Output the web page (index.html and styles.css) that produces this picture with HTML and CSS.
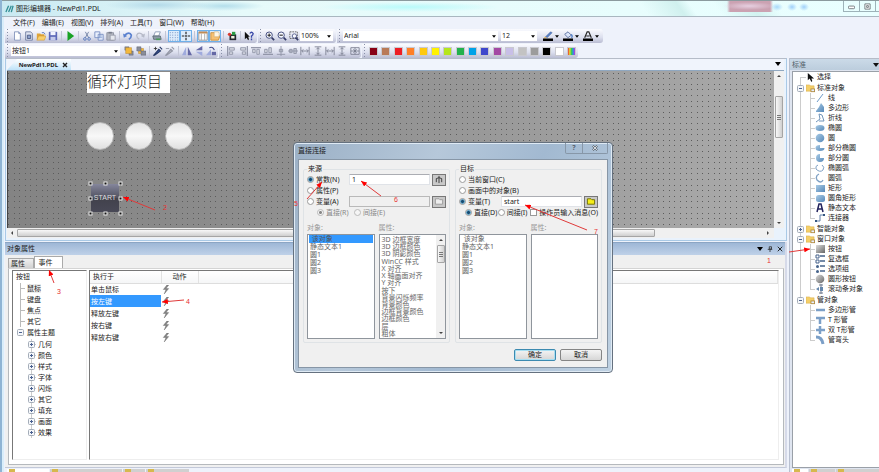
FILE: index.html
```html
<!DOCTYPE html>
<html lang="zh-CN">
<head>
<meta charset="utf-8">
<title>图形编辑器 - NewPdl1.PDL</title>
<link rel="stylesheet" href="styles.css">
</head>
<body>
<svg class="defs" aria-hidden="true">
  <linearGradient id="blue" x2="1" y2="1"><stop offset="0" stop-color="#a9cbe6"/><stop offset="1" stop-color="#5688b8"/></linearGradient>
  <linearGradient id="metal" x2="1" y2="1"><stop offset="0" stop-color="#ddd"/><stop offset="1" stop-color="#666"/></linearGradient>
  <symbol id="caret" viewBox="0 0 6 4"><path d="M0 0h6L3 4z"/></symbol>
  <symbol id="page" viewBox="0 0 12 12"><path d="M3 1h5l2 2v8H3z" fill="#fff" stroke="#7d8eb8"/><path d="M8 1v2h2" fill="none" stroke="#7d8eb8"/></symbol>
  <symbol id="pagecog" viewBox="0 0 12 12"><path d="M2 1h6l2 2v8H2z" fill="#dfe4f2" stroke="#66759b"/><path d="M4 5h4v4H4z" fill="#8fa2cc" stroke="#44537e"/></symbol>
  <symbol id="open" viewBox="0 0 12 12"><path d="M1 3h4l1 1h4v6H1z" fill="#e0a53a"/><path d="M3 6h9l-2 5H1z" fill="#f8cf6c" stroke="#c98f2c" stroke-width=".6"/><path d="M7 2q3-1 4 2" fill="none" stroke="#4e70b5"/></symbol>
  <symbol id="save" viewBox="0 0 12 12"><path d="M1 1h10v10H1z" fill="#5d68b8"/><path d="M3 1h6v4H3z" fill="#f2f4ff"/><path d="M3 7h6v4H3z" fill="#c3c9ea"/></symbol>
  <symbol id="play" viewBox="0 0 12 12"><path d="M3 0l8 6-8 6z" fill="#18a224"/></symbol>
  <symbol id="cut" viewBox="0 0 12 12"><path d="M4 1l4 7M8 1L4 8" stroke="#67789e" fill="none"/><circle cx="3.500" cy="9.500" r="1.600" fill="none" stroke="#4c70b8"/><circle cx="8.500" cy="9.500" r="1.600" fill="none" stroke="#4c70b8"/></symbol>
  <symbol id="copy" viewBox="0 0 12 12"><path d="M1 1h6v7H1zM5 4h6v7H5z" fill="#e9effc" stroke="#7088be"/><path d="M6 6h4M6 8h4" stroke="#8da5d4"/></symbol>
  <symbol id="paste" viewBox="0 0 12 12"><path d="M1 2h8v9H1z" fill="#b5b8c2" stroke="#8a8e9c"/><path d="M3 1h4v2H3z" fill="#777c8b"/><path d="M5 5h6v6H5z" fill="#e6e8ee" stroke="#9599a6"/></symbol>
  <symbol id="undo" viewBox="0 0 12 12"><path d="M2 5q6-5 8 0q0 3-3 5" fill="none" stroke="#5a80cf" stroke-width="2"/><path d="M0 3l1 5 4-2z" fill="#5a80cf"/></symbol>
  <symbol id="redo" viewBox="0 0 12 12"><path d="M10 5Q4 0 2 5q0 3 3 5" fill="none" stroke="#b6bac8" stroke-width="1.500"/><path d="M12 3l-1 5-4-2z" fill="#b6bac8"/></symbol>
  <symbol id="print" viewBox="0 0 12 12"><path d="M4 1h6L8 6H2z" fill="#fff" stroke="#8292ae"/><path d="M1 6h9l1 4H2z" fill="#8d9ca8" stroke="#59656f"/><path d="M5 9h5v2H5z" fill="#4b9c58"/></symbol>
  <symbol id="grid" viewBox="0 0 12 12"><path d="M1 2h11M1 5h11M1 8h11M1 11h11" stroke="#5573b2" stroke-dasharray="1 2"/></symbol>
  <symbol id="snap" viewBox="0 0 12 12"><path d="M6 1v3M6 8v3M1 6h3M8 6h3" stroke="#222" stroke-width="1.400"/><path d="M5 5h2v2H5z" fill="#222"/></symbol>
  <symbol id="panes" viewBox="0 0 12 12"><path d="M1 1h10v10H1z" fill="#fff" stroke="#8e8a8a"/><path d="M1 1h10v2H1z" fill="#c28c55"/><path d="M4 3v8M8 3v8" stroke="#a4a4a4"/></symbol>
  <symbol id="library" viewBox="0 0 12 12"><path d="M1 2h5v4h6l-2 5H1z" fill="#f7c173" stroke="#c98a35"/><path d="M5 1h5l1 2v4H5z" fill="#fff6e4" stroke="#c9a46b" stroke-width=".6"/></symbol>
  <symbol id="config" viewBox="0 0 12 12"><path d="M3 4h8v7H3z" fill="#22262e"/><path d="M6 1h4v4H6z" fill="#2c9b44"/><circle cx="3" cy="4" r="2" fill="#d93a2e"/><path d="M5 6h4v3H5z" fill="#f1f1e0"/></symbol>
  <symbol id="help" viewBox="0 0 12 12"><path d="M1 1v9l2-2 2 3 1-1-1-3h2z" fill="#111"/><path d="M7 3q2-3 4 0q0 2-2 3v2M9 9v2" fill="none" stroke="#3948a8" stroke-width="1.600"/></symbol>
  <symbol id="zoomin" viewBox="0 0 12 12"><path d="M8 8l3 3" stroke="#333a66" stroke-width="2"/><circle cx="5" cy="5" r="3.800" fill="#f7f9ff" stroke="#4a5383" stroke-width="1.200"/><path d="M3 5h4M5 3v4" stroke="#222" stroke-width="1.300"/></symbol>
  <symbol id="zoomout" viewBox="0 0 12 12"><path d="M8 8l3 3" stroke="#333a66" stroke-width="2"/><circle cx="5" cy="5" r="3.800" fill="#f7f9ff" stroke="#4a5383" stroke-width="1.200"/><path d="M3 5h4" stroke="#222" stroke-width="1.300"/></symbol>
  <symbol id="zoomarea" viewBox="0 0 12 12"><path d="M1 1h9v8H1z" fill="none" stroke="#555" stroke-dasharray="2 1"/><circle cx="6.500" cy="6" r="2.600" fill="#f7f9ff" stroke="#4a5383"/><path d="M8 8l3 3" stroke="#333a66" stroke-width="2"/></symbol>
  <symbol id="pen" viewBox="0 0 12 12"><path d="M3 7l6-6 2 1-6 6z" fill="#5b83c8" stroke="#31528f" stroke-width=".5"/><path d="M2 7l3 1-4 1z" fill="#e0b05a"/><path d="M0 9h12v3H0z"/></symbol>
  <symbol id="fill" viewBox="0 0 12 12"><path d="M2 4l4-3 4 4-4 3z" fill="#dce6fa" stroke="#4f6597"/><path d="M10 4q2 3 0 4" fill="none" stroke="#4678c4" stroke-width="1.500"/><path d="M0 9h12v3H0z"/></symbol>
  <symbol id="fontcolor" viewBox="0 0 12 12"><path d="M2 8l3-7h2l3 7M4 6h4" fill="none" stroke="#222" stroke-width="1.400"/><path d="M0 9h12v3H0z"/></symbol>
  <symbol id="front" viewBox="0 0 12 12"><path d="M6 6h5v5H6zM1 1h5v4H1z" fill="#8a8d99" stroke="#555b6b" stroke-width=".5"/><path d="M2 2h7v7H2z" fill="#f3b83c" stroke="#b17a1b" stroke-width=".5"/></symbol>
  <symbol id="back" viewBox="0 0 12 12"><path d="M3 3h6v6H3z" fill="#f3b83c" stroke="#b17a1b" stroke-width=".5"/><path d="M6 6h6v5H6zM1 1h5v5H1z" fill="#8a8d99" stroke="#555b6b" stroke-width=".5"/></symbol>
  <symbol id="pipette" viewBox="0 0 12 12"><path d="M1 11l6-7 2 2-7 5zM8 1l3 3" fill="#36549c" stroke="#263866" stroke-width="1.300"/><path d="M1 3h4M3 1v4" stroke="#333"/></symbol>
  <symbol id="pipette-off" viewBox="0 0 12 12"><path d="M1 11l6-7 2 2-7 5zM8 1l3 3" fill="#b6b9c4" stroke="#9296a5" stroke-width="1.300"/><path d="M1 3h4" stroke="#9296a5"/></symbol>
  <symbol id="fliph" viewBox="0 0 12 12"><path d="M5 1v10H0z" fill="#9faadd"/><path d="M7 1v10h5z" fill="#6468a5"/></symbol>
  <symbol id="flipv" viewBox="0 0 12 12"><path d="M10 0v5H2z" fill="#6468a5"/><path d="M10 12V7H2z" fill="#9faadd"/></symbol>
  <symbol id="rotate" viewBox="0 0 12 12"><path d="M6 4v7H0z" fill="#9faadd"/><path d="M7 7h5v4H7z" fill="#6468a5"/><path d="M4 2q4-2 6 3" fill="none" stroke="#434c85" stroke-width="1.300"/></symbol>
  <symbol id="al" viewBox="0 0 12 12"><path d="M2 0v12" stroke="#8d91a4" stroke-width="1.400"/><path d="M4 2h6v3H4zM4 7h4v3H4z" fill="#d5d8e2" stroke="#8d91a4"/></symbol>
  <symbol id="ar" viewBox="0 0 12 12"><path d="M10 0v12" stroke="#8d91a4" stroke-width="1.400"/><path d="M2 2h6v3H2zM4 7h4v3H4z" fill="#d5d8e2" stroke="#8d91a4"/></symbol>
  <symbol id="at" viewBox="0 0 12 12"><path d="M0 2h12" stroke="#8d91a4" stroke-width="1.400"/><path d="M2 4h3v4H2zM7 4h3v6H7z" fill="#d5d8e2" stroke="#8d91a4"/></symbol>
  <symbol id="ab" viewBox="0 0 12 12"><path d="M0 10h12" stroke="#8d91a4" stroke-width="1.400"/><path d="M2 4h3v4H2zM7 2h3v6H7z" fill="#d5d8e2" stroke="#8d91a4"/></symbol>
  <symbol id="cv" viewBox="0 0 12 12"><path d="M6 0v12M1 10h10M4 4h4v3H4z" fill="#c3c6d2" stroke="#8d91a4"/></symbol>
  <symbol id="ch" viewBox="0 0 12 12"><path d="M0 6h12M2 4h3v4H2zM7 3h3v6H7z" fill="#c3c6d2" stroke="#8d91a4"/></symbol>
  <symbol id="sh" viewBox="0 0 12 12"><path d="M1 1v10M11 1v10M2 6h8M4 4L2 6l2 2M8 4l2 2-2 2" fill="none" stroke="#777b8d"/></symbol>
  <symbol id="sv" viewBox="0 0 12 12"><path d="M2 1h8M2 11h8M6 2v8M4 4l2-2 2 2M4 8l2 2 2-2" fill="none" stroke="#777b8d"/></symbol>
  <symbol id="sb" viewBox="0 0 12 12"><path d="M1 2h10v8H1zM6 2v8M1 6h10M4 4l4 4M8 4L4 8" fill="none" stroke="#777b8d"/></symbol>
  <symbol id="cursor" viewBox="0 0 10 10"><path d="M2 0v8l2-2 2 4 1-1-1-3h3z" fill="#111"/></symbol>
  <symbol id="folder" viewBox="0 0 10 10"><path d="M0 1h4l1 1h4v6H0z" fill="#f4cf69" stroke="#d3a543" stroke-width=".5"/><path d="M5 5h5v4H5z" fill="#b28d45"/><path d="M6 6h3v2H6z" fill="#e8f0ff"/></symbol>
  <symbol id="line" viewBox="0 0 10 10"><path d="M2 9l6-8" stroke="#6f9bc8"/></symbol>
  <symbol id="polygon" viewBox="0 0 10 10"><path d="M1 8l3-4 2-4 3 4v5H1z" fill="url(#blue)"/></symbol>
  <symbol id="polyline" viewBox="0 0 10 10"><path d="M1 9l4-3-1-5 3 1 2 6H4" fill="none" stroke="#7295ba"/></symbol>
  <symbol id="ellipse" viewBox="0 0 10 10"><ellipse cx="5" cy="5" rx="4.500" ry="3" fill="url(#blue)"/></symbol>
  <symbol id="circle" viewBox="0 0 10 10"><circle cx="5" cy="5" r="4.300" fill="url(#blue)"/></symbol>
  <symbol id="epie" viewBox="0 0 10 10"><path d="M5 5V2a4.500 3 0 1 0 4.500 3z" fill="url(#blue)"/></symbol>
  <symbol id="pie" viewBox="0 0 10 10"><path d="M5 5V1a4 4 0 1 0 4 4z" fill="url(#blue)"/></symbol>
  <symbol id="earc" viewBox="0 0 10 10"><path d="M3 2Q0 3 1 6q4 4 7 1 2-3-1-5" fill="none" stroke="#7ea0c4"/></symbol>
  <symbol id="arc" viewBox="0 0 10 10"><path d="M4 1Q0 3 2 7q4 4 6 0" fill="none" stroke="#7ea0c4" stroke-width="1.300"/></symbol>
  <symbol id="rect" viewBox="0 0 10 10"><path d="M1 2h9v7H1z" fill="url(#blue)"/></symbol>
  <symbol id="rrect" viewBox="0 0 10 10"><rect x="1" y="2" width="9" height="7" rx="2.500" fill="url(#blue)"/></symbol>
  <symbol id="static" viewBox="0 0 10 10"><path d="M2 9l2-8h2l2 8M3 6h4" fill="none" stroke="#24245e" stroke-width="1.500"/></symbol>
  <symbol id="connector" viewBox="0 0 10 10"><path d="M1 8h4V2h4" fill="none" stroke="#6380aa"/><path d="M0 7h2v2H0zM8 1h2v2H8z" fill="#35567f"/></symbol>
  <symbol id="button" viewBox="0 0 10 10"><path d="M1 1h9v8H1z" fill="url(#metal)"/></symbol>
  <symbol id="check" viewBox="0 0 10 10"><path d="M1 1h3v3H1zM1 6h3v3H1z" fill="#fff" stroke="#46638b"/><path d="M5 2h5M5 7h5" stroke="#46638b" stroke-width="1.500"/></symbol>
  <symbol id="option" viewBox="0 0 10 10"><circle cx="2.500" cy="2.500" r="1.500" fill="#46638b"/><circle cx="2.500" cy="7.500" r="1.500" fill="#46638b"/><path d="M5 2h5M5 7h5" stroke="#46638b" stroke-width="1.500"/></symbol>
  <symbol id="round" viewBox="0 0 10 10"><circle cx="5" cy="5" r="4.300" fill="url(#metal)"/></symbol>
  <symbol id="slider" viewBox="0 0 10 10"><path d="M6 0v10M4 1h4M4 9h4" stroke="#707b8d"/><path d="M1 5l3-2v4zM5 3h3v4H5z" fill="#6587ac"/></symbol>
  <symbol id="pipe" viewBox="0 0 10 10"><path d="M1 5h9" stroke="#7b9fc7" stroke-width="2.500"/></symbol>
  <symbol id="tpipe" viewBox="0 0 10 10"><path d="M1 3h9M5 3v6" stroke="#7b9fc7" stroke-width="2.500"/></symbol>
  <symbol id="xpipe" viewBox="0 0 10 10"><path d="M1 5h9M5 1v8" stroke="#7b9fc7" stroke-width="2.500"/></symbol>
  <symbol id="elbow" viewBox="0 0 10 10"><path d="M1 2q6 0 7 7" fill="none" stroke="#7b9fc7" stroke-width="3"/></symbol>
  <symbol id="minus" viewBox="0 0 7 7"><rect x=".5" y=".5" width="6" height="6" rx="1" fill="#f5f7fa" stroke="#a4adb9"/><path d="M2 3.500h3" stroke="#4a6190"/></symbol>
  <symbol id="plus" viewBox="0 0 7 7"><rect x=".5" y=".5" width="6" height="6" rx="1" fill="#f5f7fa" stroke="#a4adb9"/><path d="M2 3.500h3M3.500 2v3" stroke="#4a6190"/></symbol>
  <symbol id="bolt" viewBox="0 0 8 10"><path d="M5 0L1 5h3L2 10l5-6H4l3-4z" fill="#858585" stroke="#5c5c5c" stroke-width=".4"/></symbol>
</svg>

<div class="app">
  <header class="titlebar">
    <svg class="app-icon" viewBox="0 0 10 10"><path d="M1 9l3-7M4 9l3-7M7 9l2-7" stroke="#348f96" stroke-width="1.500"/></svg>
    <h1>图形编辑器 - NewPdl1.PDL</h1>
    <div class="window-buttons">
      <button aria-label="最小化"><svg viewBox="0 0 8 8"><rect x=".5" y="3.500" width="7" height="3" rx="1" fill="#fff" stroke="#6b7478"/></svg></button>
      <button aria-label="还原"><svg viewBox="0 0 8 8"><path d="M1 1h6v6H1zM3 3h2v2H3z" fill="#fff" stroke="#6b7478"/></svg></button>
    </div>
  </header>
  <nav class="menu">
    <button>文件(F)</button><button>编辑(E)</button><button>视图(V)</button><button>排列(A)</button><button>工具(T)</button><button>窗口(W)</button><button>帮助(H)</button>
  </nav>
  <div class="toolbars">
    <div class="toolrow">
      <div class="toolbar main-tools">
        <button aria-label="新建"><svg><use href="#page"/></svg></button><button aria-label="新建类型"><svg><use href="#pagecog"/></svg></button><button aria-label="打开"><svg><use href="#open"/></svg></button><button aria-label="保存"><svg><use href="#save"/></svg></button>
        <i></i><button aria-label="运行"><svg><use href="#play"/></svg></button>
        <i></i><button aria-label="剪切"><svg><use href="#cut"/></svg></button><button aria-label="复制"><svg><use href="#copy"/></svg></button><button aria-label="粘贴"><svg><use href="#paste"/></svg></button>
        <i></i><button aria-label="撤销"><svg><use href="#undo"/></svg></button><button aria-label="重做"><svg><use href="#redo"/></svg></button>
        <i></i><button aria-label="打印"><svg><use href="#print"/></svg></button>
        <i></i><button class="on" aria-label="网格"><svg><use href="#grid"/></svg></button><button class="on" aria-label="对齐网格"><svg><use href="#snap"/></svg></button>
        <i></i><button class="on" aria-label="属性窗口"><svg><use href="#panes"/></svg></button><button class="on" aria-label="库"><svg><use href="#library"/></svg></button>
        <i></i><button aria-label="组态"><svg><use href="#config"/></svg></button>
        <i></i><button aria-label="帮助"><svg><use href="#help"/></svg></button>
      </div>
      <div class="toolbar zoom-tools">
        <button aria-label="放大"><svg><use href="#zoomin"/></svg></button><button aria-label="缩小"><svg><use href="#zoomout"/></svg></button><button aria-label="区域缩放"><svg><use href="#zoomarea"/></svg></button>
        <span class="combo"><select aria-label="缩放比例"><option>100%</option></select><svg><use href="#caret"/></svg></span>
      </div>
      <div class="toolbar font-tools">
        <span class="combo family"><select aria-label="字体"><option>Arial</option></select><svg><use href="#caret"/></svg></span>
        <span class="combo size"><select aria-label="字号"><option>12</option></select><svg><use href="#caret"/></svg></span>
        <button class="drop" aria-label="线条颜色"><svg><use href="#pen"/></svg><svg class="tiny"><use href="#caret"/></svg></button><button class="drop" aria-label="填充颜色"><svg><use href="#fill"/></svg><svg class="tiny"><use href="#caret"/></svg></button><button class="drop" aria-label="字体颜色"><svg><use href="#fontcolor"/></svg><svg class="tiny"><use href="#caret"/></svg></button>
      </div>
    </div>
    <div class="toolrow">
      <div class="toolbar object-tools">
        <span class="combo"><select aria-label="对象"><option>按钮1</option></select><svg><use href="#caret"/></svg></span>
        <button aria-label="置前"><svg><use href="#front"/></svg></button><button aria-label="置后"><svg><use href="#back"/></svg></button>
        <i></i><button aria-label="复制属性"><svg><use href="#pipette"/></svg></button><button aria-label="分配属性"><svg><use href="#pipette-off"/></svg></button>
        <i></i><button aria-label="水平镜像"><svg><use href="#fliph"/></svg></button><button aria-label="垂直镜像"><svg><use href="#flipv"/></svg></button><button aria-label="旋转"><svg><use href="#rotate"/></svg></button>
      </div>
      <div class="toolbar align-tools">
        <button aria-label="左对齐"><svg><use href="#al"/></svg></button><button aria-label="右对齐"><svg><use href="#ar"/></svg></button><button aria-label="上对齐"><svg><use href="#at"/></svg></button><button aria-label="下对齐"><svg><use href="#ab"/></svg></button><button aria-label="水平居中"><svg><use href="#cv"/></svg></button><button aria-label="垂直居中"><svg><use href="#ch"/></svg></button><button aria-label="水平间隔"><svg><use href="#sh"/></svg></button><button aria-label="垂直间隔"><svg><use href="#sv"/></svg></button><button aria-label="相同宽度"><svg><use href="#sh"/></svg></button><button aria-label="相同高度"><svg><use href="#sv"/></svg></button><button aria-label="相同大小"><svg><use href="#sb"/></svg></button>
      </div>
      <div class="toolbar swatches">
        <button class="c1" aria-label="深红"></button><button class="c2" aria-label="棕"></button><button class="c3" aria-label="红"></button><button class="c4" aria-label="橙"></button><button class="c5" aria-label="金"></button><button class="c6" aria-label="黄"></button><button class="c7" aria-label="黄绿"></button><button class="c8" aria-label="绿"></button><button class="c9" aria-label="天蓝"></button><button class="c10" aria-label="蓝"></button><button class="c11" aria-label="紫"></button><button class="c12" aria-label="淡紫"></button><button class="c13" aria-label="浅灰"></button><button class="c14" aria-label="灰"></button><button class="c15" aria-label="黑"></button><button class="c16" aria-label="白"></button><button class="c17" aria-label="其它颜色"></button>
      </div>
    </div>
  </div>

  <div class="workspace">
    <main class="left">
      <section class="document">
        <div class="doc-tabs"><div class="doc-tab"><b>NewPdl1.PDL</b><button aria-label="关闭"><svg viewBox="0 0 6 6"><path d="M1 1l4 4M5 1L1 5" stroke="#222" stroke-width="1.400"/></svg></button></div><svg class="arrow"><use href="#caret"/></svg></div>
        <div class="canvas-row">
          <div class="canvas">
            <svg class="dots" aria-hidden="true"><pattern id="dots" width="28" height="28" patternUnits="userSpaceOnUse"><path d="M0 2.500h28M0 7.500h28M0 13.500h28M0 18.500h28M0 24.500h28" stroke="#5c5c5c" stroke-dasharray="1 5 1 4 1 5 1 4 1 5"/></pattern><rect width="100%" height="100%" fill="url(#dots)"/></svg>
            <div class="heading">循环灯项目</div>
            <div class="lamp l1"></div><div class="lamp l2"></div><div class="lamp l3"></div>
            <div class="selected"><button>START</button>
              <svg viewBox="0 0 34 34"><g fill="#111" stroke="#e8e8e8"><rect x="1" y="1" width="3" height="3"/><rect x="16" y="1" width="3" height="3"/><rect x="31" y="1" width="3" height="3"/><rect x="1" y="16" width="3" height="3"/><rect x="31" y="16" width="3" height="3"/><rect x="1" y="31" width="3" height="3"/><rect x="16" y="31" width="3" height="3"/><rect x="31" y="31" width="3" height="3"/></g></svg>
            </div>
          </div>
          <div class="vscroll"><svg viewBox="0 0 6 4"><path d="M1 3l2-2 2 2z"/></svg><span class="thumb"></span><svg viewBox="0 0 6 4"><path d="M1 1l2 2 2-2z"/></svg></div>
        </div>
        <div class="hscroll"><svg viewBox="0 0 4 6"><path d="M3 1L1 3l2 2z"/></svg><span class="thumb"></span><svg viewBox="0 0 4 6"><path d="M1 1l2 2-2 2z"/></svg></div>
      </section>
      <section class="properties">
        <div class="panel-head"><h2>对象属性</h2><svg class="arrow"><use href="#caret"/></svg><svg viewBox="0 0 8 8"><path d="M3 1h3v3H3zM1 4.500h6M4 5v3" fill="none" stroke="#222"/></svg><svg viewBox="0 0 8 8"><path d="M1 1l6 6M7 1L1 7" stroke="#222" stroke-width="1.300"/></svg></div>
        <div class="tabs"><button>属性</button><button class="active">事件</button></div>
        <div class="panel-body">
          <ul class="prop-tree">
            <li class="root">按钮
              <ul>
                <li class="focus"><span>鼠标</span></li><li>键盘</li><li>焦点</li><li>其它</li>
                <li class="open"><svg><use href="#minus"/></svg>属性主题
                  <ul>
                    <li><svg><use href="#plus"/></svg>几何</li><li><svg><use href="#plus"/></svg>颜色</li><li><svg><use href="#plus"/></svg>样式</li><li><svg><use href="#plus"/></svg>字体</li><li><svg><use href="#plus"/></svg>闪烁</li><li><svg><use href="#plus"/></svg>其它</li><li><svg><use href="#plus"/></svg>填充</li><li><svg><use href="#plus"/></svg>画面</li><li><svg><use href="#plus"/></svg>效果</li>
                  </ul>
                </li>
              </ul>
            </li>
          </ul>
          <div class="events">
            <table>
              <thead><tr><th class="name">执行于</th><th class="action">动作</th><th></th></tr></thead>
              <tbody>
                <tr><td>单击鼠标</td><td><svg><use href="#bolt"/></svg></td><td></td></tr>
                <tr class="current"><td>按左键</td><td><svg><use href="#bolt"/></svg></td><td></td></tr>
                <tr><td>释放左键</td><td><svg><use href="#bolt"/></svg></td><td></td></tr>
                <tr><td>按右键</td><td><svg><use href="#bolt"/></svg></td><td></td></tr>
                <tr><td>释放右键</td><td><svg><use href="#bolt"/></svg></td><td></td></tr>
              </tbody>
            </table>
          </div>
        </div>
      </section>
      <div class="bottom-tabs"><span class="lit"></span><span class="wide"></span><span></span><span class="mid"></span></div>
    </main>
    <aside class="palette">
      <div class="palette-head"><h2>标准</h2><svg class="arrow"><use href="#caret"/></svg></div>
      <ul class="object-tree">
        <li class="top pick"><div class="node"><svg><use href="#cursor"/></svg>选择</div></li>
        <li class="top spaced"><div class="node"><svg class="ex"><use href="#minus"/></svg><svg><use href="#folder"/></svg>标准对象</div>
          <ul>
            <li><svg><use href="#line"/></svg>线</li><li><svg><use href="#polygon"/></svg>多边形</li><li><svg><use href="#polyline"/></svg>折线</li><li><svg><use href="#ellipse"/></svg>椭圆</li><li><svg><use href="#circle"/></svg>圆</li><li><svg><use href="#epie"/></svg>部分椭圆</li><li><svg><use href="#pie"/></svg>部分圆</li><li><svg><use href="#earc"/></svg>椭圆弧</li><li><svg><use href="#arc"/></svg>圆弧</li><li><svg><use href="#rect"/></svg>矩形</li><li><svg><use href="#rrect"/></svg>圆角矩形</li><li><svg><use href="#static"/></svg>静态文本</li><li><svg><use href="#connector"/></svg>连接器</li>
          </ul></li>
        <li class="top spaced"><div class="node"><svg class="ex"><use href="#plus"/></svg><svg><use href="#folder"/></svg>智能对象</div></li>
        <li class="top"><div class="node"><svg class="ex"><use href="#minus"/></svg><svg><use href="#folder"/></svg>窗口对象</div>
          <ul>
            <li><svg><use href="#button"/></svg>按钮</li><li><svg><use href="#check"/></svg>复选框</li><li><svg><use href="#option"/></svg>选项组</li><li><svg><use href="#round"/></svg>圆形按钮</li><li><svg><use href="#slider"/></svg>滚动条对象</li>
          </ul></li>
        <li class="top spaced"><div class="node"><svg class="ex"><use href="#minus"/></svg><svg><use href="#folder"/></svg>管对象</div>
          <ul>
            <li><svg><use href="#pipe"/></svg>多边形管</li><li><svg><use href="#tpipe"/></svg>T 形管</li><li><svg><use href="#xpipe"/></svg>双 T形管</li><li><svg><use href="#elbow"/></svg>管弯头</li>
          </ul></li>
      </ul>
      <div class="bottom-tabs"><span class="lit"></span><span class="mid"></span><span class="wide"></span></div>
    </aside>
  </div>
</div>

<form class="dialog" role="dialog" aria-labelledby="dialog-title">
  <div class="dialog-head"><h2 id="dialog-title">直接连接</h2>
    <div class="dialog-controls"><button type="button" aria-label="帮助">?</button><button type="button" aria-label="关闭"><svg viewBox="0 0 8 8"><path d="M1 1l6 6M7 1L1 7" stroke="#5b6570" stroke-width="2.400"/><path d="M1 1l6 6M7 1L1 7" stroke="#fff"/></svg></button></div>
  </div>
  <div class="dialog-body">
    <div class="groups">
      <fieldset>
        <legend>来源</legend>
        <div class="row"><label class="lead"><input type="radio" name="src" checked>常数(N)</label><input type="text" value="1" aria-label="常数值"><button type="button" class="pick-btn" aria-label="选择常数"><svg viewBox="0 0 10 10"><path d="M5 1v8M2 4l3-1 3 1M2 4v4M8 4v4" fill="none" stroke="#333"/></svg></button></div>
        <div class="row"><label class="lead"><input type="radio" name="src">属性(P)</label></div>
        <div class="row"><label class="lead"><input type="radio" name="src">变量(A)</label><input type="text" disabled aria-label="源变量"><button type="button" class="pick-btn" disabled aria-label="选择变量"><svg viewBox="0 0 10 10"><path d="M1 2h4l1 1h3v5H1z" fill="#eee" stroke="#999"/></svg></button></div>
        <div class="row sub inactive"><label class="a"><input type="radio" name="srcmode" disabled checked>直接(R)</label><label><input type="radio" name="srcmode" disabled>间接(E)</label></div>
        <div class="lists">
          <div class="list"><span>对象:</span><ul class="box"><li class="hit">&nbsp;该对象</li><li>静态文本1</li><li>圆1</li><li>圆2</li><li>圆3</li></ul></div>
          <div class="list"><span>属性:</span><div class="box full"><ul><li>3D 边框宽度</li><li>3D 边框颜色</li><li>3D 阴影颜色</li><li>WinCC 样式</li><li>X 对齐</li><li>X 轴画面对齐</li><li>Y 对齐</li><li>按下</li><li>背景闪烁频率</li><li>背景颜色</li><li>边框背景颜色</li><li>边框颜色</li><li>层</li><li>粗体</li></ul>
            <div class="vscroll"><svg viewBox="0 0 6 4"><path d="M1 3l2-2 2 2z"/></svg><span class="thumb"></span><svg viewBox="0 0 6 4"><path d="M1 1l2 2 2-2z"/></svg></div></div></div>
        </div>
      </fieldset>
      <fieldset>
        <legend>目标</legend>
        <div class="row"><label><input type="radio" name="dst">当前窗口(C)</label></div>
        <div class="row"><label><input type="radio" name="dst">画面中的对象(B)</label></div>
        <div class="row"><label class="lead"><input type="radio" name="dst" checked>变量(T)</label><input type="text" value="start" aria-label="目标变量"><button type="button" class="pick-btn" aria-label="选择目标变量"><svg viewBox="0 0 10 10"><path d="M1 2h4l1 1h3v5H1z" fill="#f6ee19" stroke="#6b6900"/></svg></button></div>
        <div class="row sub"><label class="b"><input type="radio" name="dstmode" checked>直接(D)</label><label class="b"><input type="radio" name="dstmode">间接(I)</label><label><input type="checkbox">操作员输入消息(O)</label></div>
        <div class="lists">
          <div class="list"><span>对象:</span><ul class="box"><li>&nbsp;该对象</li><li>静态文本1</li><li>圆1</li><li>圆2</li><li>圆3</li></ul></div>
          <div class="list"><span>属性:</span><ul class="box"></ul></div>
        </div>
      </fieldset>
    </div>
    <div class="actions"><button type="submit" class="default">确定</button><button type="button">取消</button></div>
  </div>
</form>

<svg class="notes" viewBox="0 0 879 472">
  <defs><marker id="tip" viewBox="0 0 7 6" refX="7" refY="3" markerWidth="6" markerHeight="5" markerUnits="userSpaceOnUse" orient="auto"><path d="M0 0l7 3-7 3z" fill="#f00"/></marker></defs>
  <g stroke="#e03a3a">
    <path d="M789 252L810 249" marker-end="url(#tip)"/><path d="M155 210L123 197" marker-end="url(#tip)"/><path d="M54 283L49 270" marker-end="url(#tip)"/><path d="M184 300L162 302" marker-end="url(#tip)"/><path d="M307 199L322 182" marker-end="url(#tip)"/><path d="M381 196L361 181" marker-end="url(#tip)"/><path d="M587 230L525 205" marker-end="url(#tip)"/>
  </g>
  <text x="767" y="263">1</text><text x="163" y="210">2</text><text x="57" y="294">3</text><text x="186" y="304">4</text><text x="294" y="206">5</text><text x="394" y="202">6</text><text x="594" y="234">7</text>
</svg>
</body>
</html>
```
FILE: styles.css
```css
* { box-sizing: border-box; }
html, body { height: 100%; }
body {
  margin: 0;
  overflow: hidden;
  font: 7px/10px "Noto Sans", "Noto Sans CJK SC", sans-serif;
  color: #222;
  background: #eef2fb;
}
h1, h2, ul { margin: 0; padding: 0; font-size: inherit; font-weight: normal; list-style: none; }
button, input, select { margin: 0; padding: 0; border: 0; border-radius: 0; background: none; font: inherit; color: inherit; appearance: none; outline: 0; }
svg { display: block; flex: none; }
.defs { position: absolute; width: 0; height: 0; }
.arrow { width: 6px; height: 4px; }

.app { display: flex; flex-direction: column; height: 100vh; border-left: 2px solid #8fb4d4; box-shadow: inset 2px 0 #d9edfa; }

.titlebar {
  display: flex;
  align-items: center;
  flex: none;
  height: 17px;
  padding-left: 3px;
  border-top: 1px solid #8b9a9e;
  border-bottom: 1px solid #a9b7c0;
  background:
    radial-gradient(ellipse 52px 6px at 155px 4px, #b4dae9, transparent),
    radial-gradient(ellipse 40px 5px at 222px 5px, #b4deeb, transparent),
    radial-gradient(ellipse 90px 5px at 408px 6px, #b9fafa, transparent),
    radial-gradient(ellipse 6px 4px at 775px 6px, #a8d8fa, transparent),
    radial-gradient(ellipse 5px 4px at 790px 6px, #9fd0fa, transparent),
    radial-gradient(ellipse 5px 4px at 802px 6px, #9fd0fa, transparent),
    radial-gradient(ellipse 26px 4px at 747px 5px, #e6cfe0, transparent),
    linear-gradient(90deg, transparent 725px, #cba2b2 728px, #cba2b2 768px, transparent 771px) 0 0 / 100% 11px no-repeat,
    linear-gradient(55deg, transparent 530px, #d0f0ee 560px, transparent 570px, transparent 590px, #d2f2f0 620px, transparent 640px),
    linear-gradient(90deg, #c9e9f2, #e6fafa 240px, #e9ffff);
}
.app-icon { width: 9px; height: 9px; }
.titlebar h1 { flex: 1; margin-left: 2px; font-size: 7px; }
.window-buttons { display: flex; align-self: flex-start; padding-right: 3px; border: 1px solid #9eb3b9; border-top: 0; border-right: 0; }
.window-buttons button { display: grid; place-items: center; width: 16px; height: 10px; border-right: 1px solid #9eb3b9; }
.window-buttons svg { width: 7px; height: 7px; }

.menu { display: flex; flex: none; gap: 7px; height: 12px; padding-left: 11px; }
.menu button { height: 12px; }

.toolbars { display: flex; flex: none; flex-direction: column; gap: 1px; padding-left: 3px; height: 29px; }
.toolrow { display: flex; gap: 1px; height: 14px; }
.toolbar {
  display: flex;
  align-items: center;
  padding-left: 6px;
  border-radius: 0 3px 3px 0;
  background:
    radial-gradient(circle 1px, #8990a8 60%, transparent) 1px 2px / 3px 3px repeat-y,
    linear-gradient(#fafbff, #dcdfee 60%, #b9bcd2);
}
.toolbar button { display: flex; flex: none; justify-content: center; align-items: center; width: 12px; height: 12px; }
.toolbar button svg { width: 10px; height: 10px; }
.toolbar i { flex: none; width: 5px; height: 10px; background: linear-gradient(90deg, transparent 2px, #c3c6d6 2px, #c3c6d6 3px, transparent 3px); }
.toolbar button.on { border: 1px solid #6fb0ea; background: #dcecfb; }
.main-tools { width: 252px; }
.zoom-tools { width: 78px; }
.toolbar.font-tools { width: 266px; gap: 2px; padding-right: 3px; }
.object-tools { width: 213px; }
.align-tools { width: 142px; gap: 0; }
.align-tools button { flex: 1; }
.combo { display: flex; align-items: center; flex: 1; height: 10px; margin-right: 3px; padding-right: 2px; background: #fff; }
.combo select { flex: 1; min-width: 0; height: 10px; padding-left: 1px; line-height: 10px; }
.combo svg { width: 4px; height: 3px; }
.object-tools .combo { flex: none; width: 109px; }
.combo.size { flex: none; width: 36px; }
.combo.family { margin-right: 1px; }
.font-tools .drop { width: 18px; gap: 2px; }
.font-tools .drop .tiny { width: 4px; height: 3px; }
.swatches { width: 216px; justify-content: space-between; padding: 0 2px 0 7px; }
.toolbar.swatches button { width: 9px; height: 9px; border: 1px solid #c9c9cf; }
.c1 { background: #880015; } .c2 { background: #b97a57; } .c3 { background: #ed1c24; }
.c4 { background: #ff7f27; } .c5 { background: #ffc90e; } .c6 { background: #fff200; }
.c7 { background: #b5e61d; } .c8 { background: #22b14c; } .c9 { background: #00a2e8; }
.c10 { background: #3f48cc; } .c11 { background: #a349a4; } .c12 { background: #c8bfe7; }
.c13 { background: #c3c3c3; } .c14 { background: #9c9c9c; } .c15 { background: #000; }
.c16 { background: #fff; } .c17 { background: linear-gradient(90deg, #e33, #dd3, #3c5, #38e, #c3c); }

.workspace { display: flex; flex: 1; min-height: 0; padding-left: 3px; gap: 2px; }
.left { display: flex; flex: 1; flex-direction: column; min-width: 0; gap: 1px; }
.document { display: flex; flex: 182 1 0; flex-direction: column; min-height: 0; padding: 0 2px 2px 1px; border: 1px solid #a9c9e6; border-top-color: #b5bcc8; background: #e9f2fc; }
.doc-tabs { display: flex; flex: none; align-items: flex-end; height: 12px; padding-right: 3px; border-bottom: 1px solid #8fa7c0; background: #f0f4fc; }
.doc-tab { display: flex; align-items: center; justify-content: flex-end; gap: 4px; width: 64px; height: 11px; padding-right: 3px; clip-path: polygon(10px 0, 100% 0, 100% 100%, 0 100%); background: linear-gradient(#fff, #bfe2f8); }
.doc-tab svg { width: 6px; height: 6px; }
.doc-tab b { font-size: 6px; }
.doc-tabs .arrow { margin: 0 0 4px auto; }
.canvas-row { display: flex; flex: 1; min-height: 0; }
.canvas { position: relative; flex: 1; overflow: hidden; border-left: 1px solid #444; background: linear-gradient(100deg, #838383, #8f8f8f 40%, #ababab); }
.dots { position: absolute; width: 100%; height: 100%; }
.heading { position: absolute; left: 79px; top: 1px; width: 83px; height: 21px; background: #fff; font: 300 15px/18px "Noto Sans CJK SC", sans-serif; white-space: nowrap; }
.lamp { position: absolute; top: 51px; width: 28px; height: 28px; border: 1px solid #bbb; border-radius: 50%; background: linear-gradient(#e4e4e4, #f8f8f8 50%, #e0e0e0); }
.l1 { left: 78px; } .l2 { left: 117px; } .l3 { left: 157px; }
.selected { position: absolute; left: 80px; top: 110px; width: 34px; height: 34px; padding: 3px; }
.selected button { width: 28px; height: 28px; background: linear-gradient(#85869c, #50515f 50%, #42424c 52%, #484856); color: #ddd; font: 7px/28px "Liberation Sans", sans-serif; }
.selected svg { position: absolute; inset: 0; overflow: visible; }

.vscroll { display: flex; flex-direction: column; align-items: center; flex: none; width: 10px; padding: 3px 0; background: #f0f0f0; }
.vscroll svg { width: 6px; height: 4px; fill: #444; }
.thumb { border: 1px solid #a5a5a5; border-radius: 1px; background: linear-gradient(#f8f8f8, #cfcfcf); }
.vscroll .thumb { width: 8px; height: 42px; margin: 18px 0 auto; background: repeating-linear-gradient(#777 0 1px, transparent 1px 2px) center / 4px 5px no-repeat, linear-gradient(90deg, #f8f8f8, #d0d0d0); }
.hscroll { display: flex; align-items: center; flex: none; height: 10px; margin-right: 10px; padding: 0 4px 0 3px; background: #f0f0f0; }
.hscroll svg { width: 4px; height: 6px; fill: #444; }
.hscroll .thumb { width: 638px; height: 8px; margin: 0 auto 0 3px; }

.properties { display: flex; flex: 228 1 0; flex-direction: column; min-height: 0; border-right: 2px solid #d6dae9; border-bottom: 1px solid #c2c8d8; background: #f0f0f0; }
.panel-head { display: flex; flex: none; align-items: center; gap: 4px; height: 13px; padding: 0 2px; border-top: 1px solid #8ba5c4; background: linear-gradient(#9eb7d6, #bfd1e8); }
.panel-head h2 { flex: 1; }
.panel-head svg:not(.arrow) { width: 6px; height: 6px; }
.tabs { display: flex; flex: none; align-items: flex-end; height: 13px; padding-left: 3px; }
.tabs button { width: 26px; height: 10px; padding-right: 6px; border: 1px solid #aaa; border-bottom: 0; background: linear-gradient(#f0f0f0, #d2d2d2); line-height: 9px; }
.tabs .active { width: 29px; height: 12px; background: #fff; }
.panel-body { display: flex; flex: 1; gap: 2px; min-height: 0; margin: 0 1px 2px 3px; padding: 1px 4px 4px 3px; border: 1px solid #b5b9bd; border-top-color: #d4d4d4; background: #fff; }
.prop-tree { flex: none; width: 75px; border: 1px solid #eee; border-top: 1px solid #777; border-left: 1px solid #777; line-height: 11px; }
.root { padding-left: 3px; }
.root > ul { margin: 1px 0 0 4px; }
.root > ul > li { padding-left: 7px; background: linear-gradient(#bbb, #bbb) 0 0 / 1px 100% no-repeat, linear-gradient(#bbb, #bbb) 0 5px / 5px 1px no-repeat; }
.root > ul > li.open { background: none; }
.open > ul { margin: 1px 0 0 4px; }
.open li { padding-left: 7px; background: linear-gradient(#ccc, #ccc) 0 0 / 1px 100% no-repeat, linear-gradient(#ccc, #ccc) 0 5px / 5px 1px no-repeat; }
.prop-tree svg { float: left; width: 7px; height: 7px; margin: 2px 0 2px -10px; }
.focus span { background: #ececec; }
.events { flex: 1; border-top: 1px solid #777; border-left: 1px solid #777; border-right: 1px solid #eee; border-bottom: 1px solid #eee; }
table { width: 100%; border-collapse: collapse; table-layout: fixed; }
th { height: 12px; padding: 0 3px; border-right: 1px solid #e2e2e2; border-bottom: 1px solid #ddd; background: linear-gradient(#fff, #f5f6f7); font-weight: normal; text-align: left; }
th.name { width: 71px; }
th.action { width: 37px; text-align: center; }
td { height: 12px; padding: 0 1px; line-height: 11px; }
td svg { width: 8px; height: 9px; }
.current td:first-child { background: #3399ff; color: #fff; }

.bottom-tabs { display: flex; flex: none; gap: 1px; height: 3px; padding-left: 2px; }
.bottom-tabs span { width: 22px; background: linear-gradient(90deg, transparent 2px, #d6b84e 2px, #d6b84e 8px, transparent 8px) #d0d0d0; }
.bottom-tabs .lit { width: 42px; background-color: #fff; }
.bottom-tabs .wide { width: 72px; }
.bottom-tabs .mid { width: 43px; }

.palette { display: flex; flex: none; flex-direction: column; width: 90px; overflow: hidden; border-left: 1px solid #b8c0d0; background: #dfe5f0; }
.palette-head { display: flex; flex: none; align-items: center; height: 12px; padding-left: 2px; border-top: 1px solid #b5bcc8; background: linear-gradient(#cbdae8, #bccddd); color: #4f5d69; }
.palette-head h2 { flex: 1; }
.palette-head .arrow { fill: #111; }
.object-tree { flex: 1; min-height: 0; margin: 1px 0 1px 2px; padding: 0 0 0 4px; border: 1px solid #9aa0a8; border-right: 0; background: #fff; white-space: nowrap; }
.top { background: linear-gradient(#ccc, #ccc) 3px 0 / 1px 100% no-repeat; }
.top.pick { background-position: 3px 5px; }
.top:last-child { background-size: 1px 5px; }
.spaced { padding-top: 1px; }
.node { display: flex; align-items: center; gap: 2px; height: 10px; }
.node svg { width: 9px; height: 9px; }
.node .ex { width: 7px; height: 7px; }
.pick .node { padding-left: 9px; background: linear-gradient(#ccc, #ccc) 3px 5px / 6px 1px no-repeat; }
.top ul { margin-left: 13px; }
.top ul li { display: flex; align-items: center; gap: 3px; height: 10px; padding-left: 5px; background: linear-gradient(#ccc, #ccc) 0 0 / 1px 100% no-repeat, linear-gradient(#ccc, #ccc) 0 5px / 5px 1px no-repeat; }
.top ul li:last-child { background-size: 1px 5px, 5px 1px; }
.top li svg { width: 10px; height: 10px; }
.palette .bottom-tabs .lit { width: 26px; }

.dialog { position: absolute; left: 293px; top: 142px; width: 320px; padding: 0 4px 4px; border: 1px solid #65717f; border-radius: 4px; background: linear-gradient(115deg, #9bb0c6, #b6c8da 35%, #a2b9d1 60%, #bfd1e2); box-shadow: inset 0 0 0 1px #dfeaf4; }
.dialog-head { display: flex; justify-content: space-between; height: 16px; align-items: center; }
.dialog-controls { display: flex; align-self: flex-start; height: 11px; border: 1px solid #8797a8; border-top: 0; border-radius: 0 0 2px 2px; }
.dialog-controls button { display: grid; place-items: center; width: 16px; height: 10px; font-weight: bold; color: #56616d; }
.dialog-controls button + button { width: 25px; border-left: 1px solid #8797a8; }
.dialog-controls svg { width: 6px; height: 6px; }
.dialog-body { padding: 4px 5px 6px 4px; border: 1px solid #8796a6; background: #f0f0f0; }
.groups { display: flex; gap: 5px; }
fieldset { flex: 1; min-width: 0; margin: 0; padding: 0 3px 3px; border: 1px solid #dfe3e6; border-radius: 2px; }
legend { height: 10px; padding: 0 1px; }
.row { display: flex; align-items: center; height: 11px; }
.row label { display: flex; align-items: center; gap: 2px; white-space: nowrap; }
.row .lead { width: 42px; }
.row.sub { padding-left: 6px; }
.row.inactive { padding-left: 10px; color: #888; }
.sub .a { width: 37px; }
.sub .b { width: 34px; }
input[type="radio"] { flex: none; width: 7px; height: 7px; border: 1px solid #9b9b9b; border-radius: 50%; background: #fff; }
input[type="radio"]:checked { background: radial-gradient(circle, #174a70 1px, #5fa5cc 2px, #fff 3px); }
input[type="radio"]:disabled { border-color: #bbb; background: #f5f5f5; }
input[type="radio"]:disabled:checked { background: radial-gradient(circle, #888 1px, #f5f5f5 2px); }
input[type="checkbox"] { flex: none; width: 7px; height: 7px; border: 1px solid #999; background: #fff; }
input[type="text"] { flex: 1; min-width: 0; height: 11px; padding: 0 2px; border: 1px solid #e0e3e8; border-top-color: #abadb3; background: #fff; }
input[type="text"]:disabled { border-color: #b9b9b9; background: #f0f0f0; }
.pick-btn { display: grid; place-items: center; flex: none; width: 14px; height: 12px; margin-left: 2px; border: 1px solid #777; background: #c8c8c8; }
.pick-btn svg { width: 10px; height: 9px; }
.lists { display: flex; gap: 4px; margin-top: 5px; color: #666; }
.list { flex: 1; min-width: 0; }
.list > span { display: block; height: 11px; line-height: 10px; color: #999; }
.box { height: 105px; padding: 0 1px; border: 1px solid #8f959c; background: #fff; white-space: nowrap; }
.box > li { height: 8px; padding-left: 1px; line-height: 8px; }
.hit { background: #3399ff; color: #555; }
.box.full { display: flex; padding: 0; }
.full ul { display: flex; flex: 1; flex-direction: column; justify-content: space-between; min-width: 0; padding: 1px; }
.full li { height: 7px; padding-left: 1px; line-height: 7px; }
.full .vscroll { width: 9px; }
.full .thumb { height: 18px; margin-top: 3px; }
.actions { display: flex; justify-content: flex-end; gap: 4px; margin-top: 6px; }
.actions button { width: 42px; height: 12px; border: 1px solid #858585; border-radius: 2px; background: linear-gradient(#f4f4f4, #d6d6d6); line-height: 10px; }
.actions .default { border-color: #3c8ab0; box-shadow: inset 0 0 0 1px #a9dff2; }

.notes { position: absolute; left: 0; top: 0; width: 879px; height: 472px; pointer-events: none; }
.notes text { fill: #e83030; font: 7px "Liberation Sans", sans-serif; }
```
